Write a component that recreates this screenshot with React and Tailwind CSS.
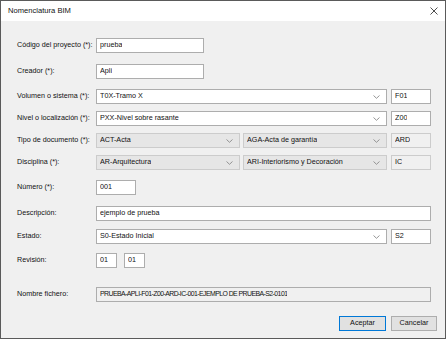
import { useState } from 'react';

function Chevron() {
    return (
        <svg width="7" height="4" viewBox="0 0 7 4" className="shrink-0">
            <path d="M0.5 0.5 L3.5 3.3 L6.5 0.5" fill="none" stroke="#8a8a8a" strokeWidth="0.9" />
        </svg>
    );
}

function TextBox({ value, className = '', disabled = false }) {
    return (
        <div
            className={`flex h-[15px] items-center border px-[3px] ${
                disabled ? 'border-[#cccccc] bg-[#f0f0f0]' : 'border-[#adadad] bg-white'
            } ${className}`}
        >
            <span className="truncate">{value}</span>
        </div>
    );
}

function Select({ value, className = '', disabled = false }) {
    return (
        <div
            className={`flex h-[15px] items-center justify-between border pl-[3px] pr-[6px] ${
                disabled ? 'border-[#cccccc] bg-[#e6e6e6]' : 'border-[#adadad] bg-white'
            } ${className}`}
        >
            <span className="truncate">{value}</span>
            <Chevron />
        </div>
    );
}

function Row({ label, top, children }) {
    return (
        <div className={`flex items-center ${top}`}>
            <div className="w-[79px] shrink-0">{label}</div>
            <div className="flex items-center">{children}</div>
        </div>
    );
}

export default function App() {
    const [descripcion] = useState('ejemplo de prueba');

    return (
        <div className="h-[340px] w-[447px] bg-white font-['Liberation_Sans',Arial,sans-serif] text-[7.2px] text-[#111]">
            <div className="flex h-[339px] w-[446px] flex-col border border-[#5a5a5a] bg-[#f0f0f0]">
                {/* title bar */}
                <div className="flex h-[20px] shrink-0 items-center justify-between bg-white pl-[7px] pr-[7px]">
                    <span className="text-[7.6px]">Nomenclatura BIM</span>
                    <svg width="8" height="8" viewBox="0 0 8 8">
                        <path d="M0.5 0.5 L7.5 7.5 M7.5 0.5 L0.5 7.5" stroke="#222" strokeWidth="0.8" />
                    </svg>
                </div>

                <div className="flex flex-col pl-[16px]">
                    <Row label="Código del proyecto (*):" top="mt-[17px]">
                        <TextBox value="prueba" className="w-[108px]" />
                    </Row>
                    <Row label="Creador (*):" top="mt-[11px]">
                        <TextBox value="Apli" className="w-[108px]" />
                    </Row>
                    <Row label="Volumen o sistema (*):" top="mt-[10px]">
                        <Select value="T0X-Tramo X" className="w-[291px]" />
                        <TextBox value="F01" className="ml-[4px] w-[40px]" />
                    </Row>
                    <Row label="Nivel o localización (*):" top="mt-[7px]">
                        <Select value="PXX-Nivel sobre rasante" className="w-[291px]" />
                        <TextBox value="Z00" className="ml-[4px] w-[40px]" />
                    </Row>
                    <Row label="Tipo de documento (*):" top="mt-[7px]">
                        <Select value="ACT-Acta" className="w-[144px]" disabled />
                        <Select value="AGA-Acta de garantía" className="ml-[3px] w-[144px]" disabled />
                        <TextBox value="ARD" className="ml-[4px] w-[40px]" disabled />
                    </Row>
                    <Row label="Disciplina (*):" top="mt-[7px]">
                        <Select value="AR-Arquitectura" className="w-[144px]" disabled />
                        <Select value="ARI-Interiorismo y Decoración" className="ml-[3px] w-[144px]" disabled />
                        <TextBox value="IC" className="ml-[4px] w-[40px]" disabled />
                    </Row>
                    <Row label="Número (*):" top="mt-[10px]">
                        <TextBox value="001" className="w-[40px]" />
                    </Row>
                    <Row label="Descripción:" top="mt-[11px]">
                        <TextBox value={descripcion} className="w-[335px]" />
                    </Row>
                    <Row label="Estado:" top="mt-[8px]">
                        <Select value="S0-Estado Inicial" className="w-[291px]" />
                        <TextBox value="S2" className="ml-[4px] w-[40px]" />
                    </Row>
                    <Row label="Revisión:" top="mt-[9px]">
                        <TextBox value="01" className="w-[21px]" />
                        <TextBox value="01" className="ml-[7px] w-[21px]" />
                    </Row>
                    <Row label="Nombre fichero:" top="mt-[19px]">
                        <TextBox
                            value="PRUEBA-APLI-F01-Z00-ARD-IC-001-EJEMPLO DE PRUEBA-S2-0101"
                            className="w-[335px] !border-[#adadad] text-[6.9px] tracking-[-0.55px]"
                            disabled
                        />
                    </Row>
                </div>

                <div className="mt-[14px] flex justify-end gap-[5px] pr-[8px]">
                    <button className="flex h-[15px] w-[47px] items-center justify-center border border-[#0078d7] bg-[#e1e1e1]">
                        Aceptar
                    </button>
                    <button className="flex h-[15px] w-[46px] items-center justify-center border border-[#adadad] bg-[#e1e1e1]">
                        Cancelar
                    </button>
                </div>
            </div>
        </div>
    );
}
